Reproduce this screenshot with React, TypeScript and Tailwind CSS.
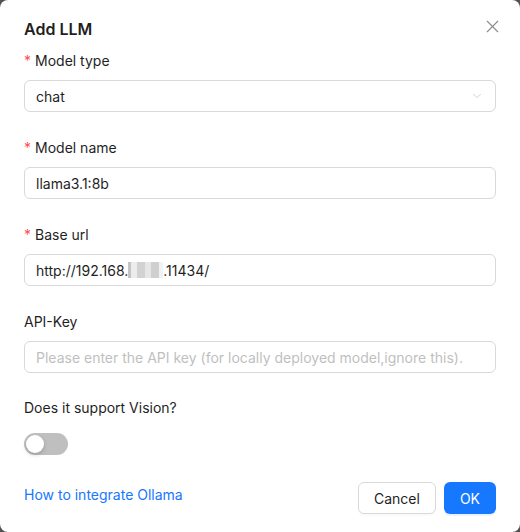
import { X, ChevronDown } from "lucide-react";

const Label = ({ text, required }: { text: string; required?: boolean }) => (
  <div className="flex h-[22px] items-center pb-0 text-[14px] text-[#1f1f1f]">
    {required && <span className="mr-1 text-[14px] text-[#ff4d4f]">*</span>}
    {text}
  </div>
);

const Field = ({ children }: { children: React.ReactNode }) => (
  <div className="flex h-[32px] items-center rounded-[6px] border border-[#d9d9d9] bg-white px-[11px] text-[14px] text-[#1f1f1f]">
    {children}
  </div>
);

const App = () => {
  return (
    <div className="h-[532px] w-[520px] bg-[#525252]" style={{ fontFamily: "Inter, 'Noto Sans', sans-serif" }}>
      <div className="relative h-full w-full rounded-[8px] bg-white px-6 pt-[17px]">
        <button className="absolute right-[17px] top-[15px] flex h-[22px] w-[22px] items-center justify-center text-[#8c8c8c]">
          <X size={21} strokeWidth={1.3} />
        </button>
        <div className="h-[24px] text-[16px] font-semibold leading-[24px] text-[#1f1f1f]">Add LLM</div>

        <div className="mt-[8px] flex flex-col">
          <Label text="Model type" required />
          <div className="mt-[9px]">
            <Field>
              <span className="flex-1">chat</span>
              <ChevronDown size={14} strokeWidth={1.2} className="text-[#bfbfbf]" />
            </Field>
          </div>

          <div className="mt-[24px]">
            <Label text="Model name" required />
          </div>
          <div className="mt-[9px]">
            <Field>llama3.1:8b</Field>
          </div>

          <div className="mt-[24px]">
            <Label text="Base url" required />
          </div>
          <div className="mt-[9px]">
            <Field>
              <span>http://192.168.</span>
              <span className="inline-flex h-[16px] w-[35px] items-stretch">
                <span className="w-[3px] bg-[#c4c4c4]" />
                <span className="w-[6px] bg-[#ececec]" />
                <span className="w-[8px] bg-[#d2d2d2]" />
                <span className="w-[6px] bg-[#e6e6e6]" />
                <span className="w-[8px] bg-[#cfcfcf]" />
                <span className="w-[4px] bg-[#f2f2f2]" />
              </span>
              <span>.11434/</span>
            </Field>
          </div>

          <div className="mt-[24px]">
            <Label text="API-Key" />
          </div>
          <div className="mt-[9px]">
            <Field>
              <span className="text-[#bfbfbf]">Please enter the API key (for locally deployed model,ignore this).</span>
            </Field>
          </div>

          <div className="mt-[23px]">
            <Label text="Does it support Vision?" />
          </div>
          <div className="mt-[10px] flex h-[32px] items-center">
            <div className="flex h-[22px] w-[44px] items-center rounded-full bg-[#bfbfbf] px-[2px]">
              <div className="h-[18px] w-[18px] rounded-full bg-white shadow-[0_2px_4px_rgba(0,35,11,0.2)]" />
            </div>
          </div>

          <div className="mt-[22px] flex items-start justify-between">
            <a className="pt-[2px] text-[14px] leading-[22px] text-[#1677ff]">How to integrate Ollama</a>
            <div className="flex gap-2">
              <button className="h-[32px] rounded-[6px] border border-[#d9d9d9] bg-white px-[15px] text-[14px] text-[#1f1f1f] shadow-[0_2px_0_rgba(0,0,0,0.02)]">
                Cancel
              </button>
              <button className="h-[32px] rounded-[6px] bg-[#1677ff] px-[16px] text-[14px] text-white shadow-[0_2px_0_rgba(5,145,255,0.1)]">
                OK
              </button>
            </div>
          </div>
        </div>
      </div>
    </div>
  );
};

export default App;
